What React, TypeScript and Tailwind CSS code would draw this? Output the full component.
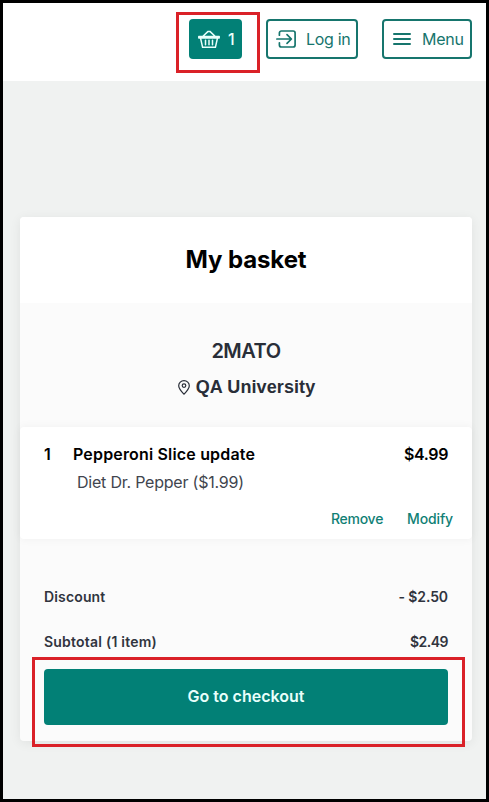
import { clsx } from 'clsx'

interface HighlightProps {
  className?: string
}

interface SummaryRowProps {
  label: string
  value: string
  labelClassName?: string
  valueClassName?: string
}

function BasketIcon() {
  return (
    <svg width="22" height="19" viewBox="0 0 22 19" fill="none" stroke="currentColor" strokeWidth="1.5" strokeLinecap="round" strokeLinejoin="round" className="shrink-0">
      <path d="M.8 6.5h20.4v1.6H.8zM2.6 8.3l2 9h12.8l2-9M5.2 6l4.9-4.6h1.8L16.8 6" />
      <path d="M7.5 10.3v4.4M11 10.3v4.4M14.5 10.3v4.4" />
    </svg>
  )
}

function LoginIcon() {
  return (
    <svg width="20" height="18" viewBox="0 0 20 18" fill="none" stroke="currentColor" strokeWidth="1.7" strokeLinecap="round" strokeLinejoin="round" className="shrink-0">
      <path d="M3.4 5.2V3a2 2 0 0 1 2-2h11.7a2 2 0 0 1 2 2v12a2 2 0 0 1-2 2H5.400a2 2 0 0 1-2-2v-2.200M.9 9h14.300M11 4.700L15.400 9 11 13.300" />
    </svg>
  )
}

function MenuIcon() {
  return (
    <svg width="18" height="12" viewBox="0 0 18 12" fill="none" stroke="currentColor" strokeWidth="2" strokeLinecap="round" className="shrink-0">
      <path d="M1 1h16M1 6h16M1 11h16" />
    </svg>
  )
}

function PinIcon() {
  return (
    <svg width="12" height="15" viewBox="0 0 12 15" fill="none" stroke="currentColor" strokeWidth="1.2" strokeLinejoin="round" className="shrink-0">
      <path d="M6 14.2C4.100 12.200.7 8.700.7 5.700a5.300 5.100 0 0 1 10.600 0c0 3-3.400 6.500-5.300 8.500z" />
      <circle cx="6" cy="5.6" r="1.8" />
    </svg>
  )
}

function Highlight({ className }: HighlightProps) {
  return <div className={clsx('absolute border-3 border-[#da2128] pointer-events-none', className)} />
}

function SummaryRow({ label, value, labelClassName, valueClassName }: SummaryRowProps) {
  return (
    <div className="flex h-5 items-center justify-between text-sm font-semibold text-[#30343e]">
      <span className={labelClassName}>{label}</span>
      <span className={valueClassName}>{value}</span>
    </div>
  )
}

export default function App() {
  return (
    <div className="h-[802px] w-[489px] overflow-hidden whitespace-nowrap border-3 border-black bg-[#f0f2f1] font-['Inter',sans-serif]">
      {/* Top bar */}
      <header className="flex h-[78px] items-start justify-end bg-white pt-4 pr-3.5 text-[#16756d]">
        <div className="relative">
          <button className="flex h-10 w-[53px] items-center gap-2 rounded bg-[#028076] pl-[9px] text-base font-medium text-[#e8fffb]">
            <BasketIcon />
            1
          </button>
          <Highlight className="-top-[7px] -left-[13px] h-[61px] w-[84px]" />
        </div>
        <button className="ml-6 flex h-10 w-[92px] items-center rounded border-2 border-current pl-2">
          <LoginIcon />
          <span className="ml-2.5 text-base tracking-[-0.3px]">Log in</span>
        </button>
        <button className="ml-6 flex h-10 w-[90px] items-center rounded border-2 border-current pl-[9px]">
          <MenuIcon />
          <span className="ml-[11px] text-base tracking-[-0.25px]">Menu</span>
        </button>
      </header>

      {/* Basket card */}
      <main className="mt-[136px] ml-[17px] h-[524px] w-[452px] rounded bg-[#fbfbfb] shadow-[0_2px_12px_rgba(0,0,0,0.07)]">
        <div className="flex h-[86px] items-center justify-center rounded-t bg-white">
          <h1 className="text-2xl font-bold tracking-[-0.1px] text-black">My basket</h1>
        </div>

        <div className="flex h-[124px] flex-col items-center pt-[34px] text-[#292e38]">
          <h2 className="text-xl leading-7 font-semibold tracking-[-0.5px]">2MATO</h2>
          <div className="mt-2 ml-px flex h-7 items-center gap-[6px]">
            <PinIcon />
            <span className="font-['Liberation_Sans',sans-serif] text-lg font-bold tracking-[0.1px]">QA University</span>
          </div>
        </div>

        <section className="h-28 rounded bg-white px-6 pt-[15px] shadow-[0_0_10px_rgba(0,0,0,0.05)]">
          <div className="flex h-6 items-center text-base font-semibold text-black">
            <span className="w-[29px]">1</span>
            <span className="flex-1 tracking-[0.17px]">Pepperoni Slice update</span>
            <span className="tracking-[-0.4px]">$4.99</span>
          </div>
          <p className="mt-1 ml-[33px] h-6 text-base tracking-[-0.22px] text-[#41454e]">Diet Dr. Pepper ($1.99)</p>
          <div className="-mr-[5px] mt-[15px] flex h-5 items-center justify-end gap-6 text-sm font-medium text-[#108075]">
            <button className="tracking-[-0.25px]">Remove</button>
            <button className="tracking-[-0.15px]">Modify</button>
          </div>
        </section>

        <div className="px-6 pt-12">
          <SummaryRow label="Discount" value="- $2.50" labelClassName="tracking-[0.15px]" valueClassName="tracking-[-0.1px]" />
          <div className="mt-[25px]">
            <SummaryRow label="Subtotal (1 item)" value="$2.49" labelClassName="tracking-[0.22px]" valueClassName="tracking-[-0.5px]" />
          </div>
          <div className="relative mt-[17px]">
            <button className="h-14 w-full rounded bg-[#028076] pb-0.5 text-base font-semibold text-[#e8fffb]">Go to checkout</button>
            <Highlight className="-top-3 -left-3 h-[90px] w-[433px]" />
          </div>
        </div>
      </main>
    </div>
  )
}
